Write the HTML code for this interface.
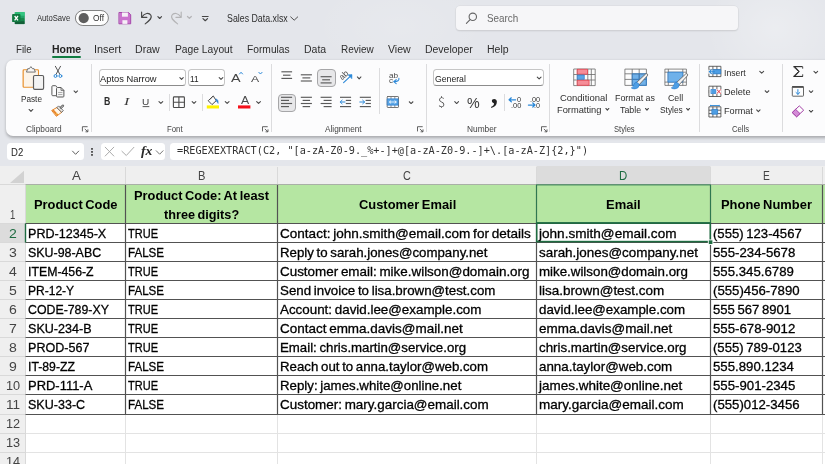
<!DOCTYPE html>
<html lang="en">
<head>
<meta charset="utf-8">
<title>Sales Data.xlsx - Excel</title>
<style>
html,body{margin:0;padding:0;}
body{width:825px;height:464px;overflow:hidden;background:#e4e6eb;font-family:"Liberation Sans",sans-serif;}
#app{position:relative;width:825px;height:464px;overflow:hidden;background:radial-gradient(ellipse 70px 60px at 775px 28px,rgba(255,255,255,.28),rgba(255,255,255,0) 100%),radial-gradient(ellipse 90px 50px at 400px 26px,rgba(255,255,255,.12),rgba(255,255,255,0) 100%),#e4e6eb;}
.t{position:absolute;white-space:nowrap;line-height:1;transform-origin:0 50%;display:block;}
.abs{position:absolute;}
#tx{position:absolute;left:0;top:0;width:825px;height:464px;will-change:transform;}
#ribbon{position:absolute;left:6px;top:60.3px;width:840px;height:75.7px;background:#fcfcfd;border-radius:7px 0 0 7px;box-shadow:0 1.2px 3px rgba(0,0,0,.26);}
#search{position:absolute;left:455.5px;top:6px;width:282.5px;height:24px;background:#f6f6f8;border-radius:4px;box-shadow:0 0 0 .6px #d9dade,0 1px 1.5px rgba(0,0,0,.16);}
.fbox{position:absolute;top:142.8px;height:17.4px;background:#fff;border-radius:3.5px;}
.combo{position:absolute;top:69px;height:17px;background:#fff;border:1px solid #c6c6c6;border-bottom-color:#8c8c8c;border-radius:3.5px;box-sizing:border-box;}
.sel{position:absolute;background:#e7e7e9;border:1px solid #a6a6a8;border-radius:4px;box-sizing:border-box;}
.vsep{position:absolute;width:1px;background:#dcdcde;}
svg{position:absolute;left:0;top:0;overflow:visible;}
</style>
</head>
<body>
<div id="app">
<div id="search"></div>
<div class="abs" style="left:51.9px;top:56.1px;width:29.2px;height:2px;border-radius:1px;background:#107c41;"></div>
<div id="ribbon"></div>
<!-- ribbon boxes -->
<div class="combo" style="left:98.5px;width:87px;"></div>
<div class="combo" style="left:188px;width:37.3px;"></div>
<div class="combo" style="left:433px;width:110.5px;"></div>
<div class="sel" style="left:317px;top:68.5px;width:18.5px;height:18.5px;"></div>
<div class="sel" style="left:277.5px;top:93.5px;width:18px;height:18px;"></div>
<div class="vsep" style="left:91.2px;top:64px;height:68px;"></div>
<div class="vsep" style="left:270.8px;top:64px;height:68px;"></div>
<div class="vsep" style="left:379px;top:68px;height:46px;"></div>
<div class="vsep" style="left:426.3px;top:64px;height:68px;"></div>
<div class="vsep" style="left:549.3px;top:64px;height:68px;"></div>
<div class="vsep" style="left:698.8px;top:64px;height:68px;"></div>
<div class="vsep" style="left:782.3px;top:64px;height:68px;"></div>
<div class="vsep" style="left:169px;top:94px;height:17px;"></div>
<div class="vsep" style="left:202.3px;top:94px;height:17px;"></div>
<div class="vsep" style="left:504px;top:94px;height:17px;"></div>
<!-- formula bar -->
<div class="fbox" style="left:7px;width:76.5px;"></div>
<div class="fbox" style="left:100.5px;width:64px;"></div>
<div class="fbox" style="left:169.5px;width:700px;"></div>
<svg width="825" height="464" viewBox="0 0 825 464">
<rect x="0" y="166.0" width="825" height="298.0" fill="#fff"/>
<rect x="0" y="166.0" width="825" height="18.5" fill="#efefef"/>
<rect x="0" y="184.5" width="25.5" height="279.5" fill="#efefef"/>
<rect x="536.5" y="166.0" width="174.0" height="18.5" fill="#dcdcdc"/>
<rect x="0" y="223.5" width="25.5" height="19.07" fill="#dcdcdc"/>
<path d="M24 170.8 L24 183 L10 183 Z" fill="#d2d2d2"/>
<rect x="25.5" y="185.0" width="799.5" height="38.30000000000001" fill="#b5e6a2"/>
<line x1="25.5" x2="825" y1="414.50" y2="414.50" stroke="#e3e3e3" stroke-width="1"/>
<line x1="25.5" x2="825" y1="433.50" y2="433.50" stroke="#e3e3e3" stroke-width="1"/>
<line x1="25.5" x2="825" y1="452.50" y2="452.50" stroke="#e3e3e3" stroke-width="1"/>
<line x1="25.5" x2="825" y1="471.50" y2="471.50" stroke="#e3e3e3" stroke-width="1"/>
<line x1="125.5" x2="125.5" y1="414.50" y2="464" stroke="#e3e3e3" stroke-width="1"/>
<line x1="277.5" x2="277.5" y1="414.50" y2="464" stroke="#e3e3e3" stroke-width="1"/>
<line x1="536.5" x2="536.5" y1="414.50" y2="464" stroke="#e3e3e3" stroke-width="1"/>
<line x1="710.5" x2="710.5" y1="414.50" y2="464" stroke="#e3e3e3" stroke-width="1"/>
<line x1="822.5" x2="822.5" y1="414.50" y2="464" stroke="#e3e3e3" stroke-width="1"/>
<line x1="125.5" x2="125.5" y1="167.0" y2="184.5" stroke="#d9d9d9" stroke-width="1"/>
<line x1="277.5" x2="277.5" y1="167.0" y2="184.5" stroke="#d9d9d9" stroke-width="1"/>
<line x1="536.5" x2="536.5" y1="167.0" y2="184.5" stroke="#d9d9d9" stroke-width="1"/>
<line x1="710.5" x2="710.5" y1="167.0" y2="184.5" stroke="#d9d9d9" stroke-width="1"/>
<line x1="822.5" x2="822.5" y1="167.0" y2="184.5" stroke="#d9d9d9" stroke-width="1"/>
<line x1="0" x2="25.5" y1="223.50" y2="223.50" stroke="#d9d9d9" stroke-width="1"/>
<line x1="0" x2="25.5" y1="242.50" y2="242.50" stroke="#d9d9d9" stroke-width="1"/>
<line x1="0" x2="25.5" y1="261.50" y2="261.50" stroke="#d9d9d9" stroke-width="1"/>
<line x1="0" x2="25.5" y1="280.50" y2="280.50" stroke="#d9d9d9" stroke-width="1"/>
<line x1="0" x2="25.5" y1="299.50" y2="299.50" stroke="#d9d9d9" stroke-width="1"/>
<line x1="0" x2="25.5" y1="318.50" y2="318.50" stroke="#d9d9d9" stroke-width="1"/>
<line x1="0" x2="25.5" y1="337.50" y2="337.50" stroke="#d9d9d9" stroke-width="1"/>
<line x1="0" x2="25.5" y1="356.50" y2="356.50" stroke="#d9d9d9" stroke-width="1"/>
<line x1="0" x2="25.5" y1="375.50" y2="375.50" stroke="#d9d9d9" stroke-width="1"/>
<line x1="0" x2="25.5" y1="394.50" y2="394.50" stroke="#d9d9d9" stroke-width="1"/>
<line x1="0" x2="25.5" y1="414.50" y2="414.50" stroke="#d9d9d9" stroke-width="1"/>
<line x1="0" x2="25.5" y1="433.50" y2="433.50" stroke="#d9d9d9" stroke-width="1"/>
<line x1="0" x2="25.5" y1="452.50" y2="452.50" stroke="#d9d9d9" stroke-width="1"/>
<line x1="0" x2="25.5" y1="471.50" y2="471.50" stroke="#d9d9d9" stroke-width="1"/>
<line x1="25.5" x2="25.5" y1="184.5" y2="464" stroke="#d9d9d9" stroke-width="1"/>
<line x1="0" x2="825" y1="184.5" y2="184.5" stroke="#d9d9d9" stroke-width="1"/>
<line x1="25.5" x2="825" y1="184.5" y2="184.5" stroke="#a9b0a6" stroke-width="1"/>
<line x1="25.5" x2="825" y1="223.50" y2="223.50" stroke="#525252" stroke-width="1.2"/>
<line x1="25.5" x2="825" y1="242.50" y2="242.50" stroke="#525252" stroke-width="1.2"/>
<line x1="25.5" x2="825" y1="261.50" y2="261.50" stroke="#525252" stroke-width="1.2"/>
<line x1="25.5" x2="825" y1="280.50" y2="280.50" stroke="#525252" stroke-width="1.2"/>
<line x1="25.5" x2="825" y1="299.50" y2="299.50" stroke="#525252" stroke-width="1.2"/>
<line x1="25.5" x2="825" y1="318.50" y2="318.50" stroke="#525252" stroke-width="1.2"/>
<line x1="25.5" x2="825" y1="337.50" y2="337.50" stroke="#525252" stroke-width="1.2"/>
<line x1="25.5" x2="825" y1="356.50" y2="356.50" stroke="#525252" stroke-width="1.2"/>
<line x1="25.5" x2="825" y1="375.50" y2="375.50" stroke="#525252" stroke-width="1.2"/>
<line x1="25.5" x2="825" y1="394.50" y2="394.50" stroke="#525252" stroke-width="1.2"/>
<line x1="25.5" x2="825" y1="414.50" y2="414.50" stroke="#525252" stroke-width="1.2"/>
<line x1="125.5" x2="125.5" y1="185.0" y2="414.50" stroke="#525252" stroke-width="1.2"/>
<line x1="277.5" x2="277.5" y1="185.0" y2="414.50" stroke="#525252" stroke-width="1.2"/>
<line x1="536.5" x2="536.5" y1="185.0" y2="414.50" stroke="#525252" stroke-width="1.2"/>
<line x1="710.5" x2="710.5" y1="185.0" y2="414.50" stroke="#525252" stroke-width="1.2"/>
<line x1="822.5" x2="822.5" y1="185.0" y2="414.50" stroke="#525252" stroke-width="1.2"/>
<rect x="536.5" y="184.9" width="174.0" height="37.70000000000001" fill="none" stroke="#2d7a50" stroke-width="0.95"/>
<rect x="536.7" y="223.10000000000002" width="173.6" height="18.47" fill="none" stroke="#1e6c41" stroke-width="1.55"/>
<rect x="708.3" y="239.9" width="4.6" height="4.6" fill="#1e6c41" stroke="#fff" stroke-width="0.9"/>
<line x1="25.5" x2="25.5" y1="223.50" y2="242.50" stroke="#1e6c41" stroke-width="1.4"/>
</svg>
<svg width="825" height="464" viewBox="0 0 825 464" fill="none" stroke-linecap="round" stroke-linejoin="round">
<!-- ===== title bar ===== -->
<g id="ic-excel">
<rect x="14.6" y="11.9" width="10.2" height="12.3" rx="1" fill="#1a9457" stroke="#f3eef3" stroke-width=".5"/><rect x="14.8" y="12.1" width="9.800" height="3.100" fill="#2cb874"/><rect x="14.8" y="15.200" width="9.800" height="3" fill="#21a366"/><rect x="14.8" y="18.200" width="9.800" height="3" fill="#17864b"/><rect x="14.8" y="21.200" width="9.800" height="2.800" fill="#125f37"/>
<rect x="19.6" y="11.9" width="5.2" height="4.2" fill="#3ccf8a" opacity=".55"/>
<rect x="12.1" y="14.1" width="8.4" height="8" rx=".9" fill="#117a41"/>
<path d="M14.6 16 L18 20.4 M18 16 L14.6 20.4" stroke="#fff" stroke-width="1.25" stroke-linecap="butt"/>
</g>
<g id="ic-toggle">
<rect x="75.4" y="10.5" width="33" height="15" rx="7.5" fill="#fdfdfd" stroke="#666" stroke-width=".8"/>
<circle cx="83.7" cy="18.1" r="5.1" fill="#5e5e5e"/>
</g>
<g id="ic-save">
<path d="M119.3 12.5 h9.2 l2.2 2.2 v9.1 h-11.4 z" fill="#cb74ce" stroke="#a23fa6" stroke-width=".9"/>
<rect x="122" y="12.5" width="5.9" height="4.200" fill="#f6f0f7"/>
<rect x="122.4" y="20.200" width="5" height="3.700" fill="#f6f0f7"/>
</g>
<g id="ic-undo" stroke="#484848" stroke-width="1.15">
<path d="M141.6 12 v5.3 h5.3"/>
<path d="M142 16.9 C144.5 13 149 12.2 150.9 15.3 C152.4 17.8 150.2 20 145.2 23.9"/>
<path d="M157.9 16.700 l1.800 1.800 l1.800 -1.800" stroke-width="1.150"/>
</g>
<g id="ic-redo" stroke="#b4b4b6" stroke-width="1.15">
<path d="M181.2 12 v5.3 h-5.3"/>
<path d="M180.8 16.9 C178.3 13 173.800 12.2 171.9 15.3 C170.4 17.8 172.600 20 177.600 23.9"/>
<path d="M187.500 16.5 l1.900 1.900 l1.900 -1.900" stroke-width="1.300"/>
</g>
<g id="ic-qat" stroke="#444" stroke-width="1.2">
<path d="M202.400 16.500 h5.700"/>
<path d="M203 18.600 l2.250 2.100 l2.250 -2.100"/>
</g>
<path d="M290.700 16.900 l3.500 3.300 l3.500 -3.300" stroke="#505050" stroke-width="1"/>
<g id="ic-search" stroke="#666" stroke-width="1.100">
<circle cx="472.800" cy="16.800" r="3.700"/>
<path d="M470.100 19.600 l-3.700 3.800"/>
</g>
<g id="ic-paste">
<path d="M27 69.9 H24 Q23.200 69.9 23.200 70.700 V86.400 Q23.200 87.200 24 87.200 H33 M34.800 69.9 H37.600 Q38.400 69.9 38.400 70.700 V75" fill="none" stroke="#e8912d" stroke-width="1.300"/>
<path d="M23.900 70.600 H37.700 V75.400 H33.400 V86.500 H23.900 Z" fill="#fcf4e9" stroke="none"/>
<path d="M26.600 71.700 L27.700 68.700 H29.300 L30.900 66.600 L32.500 68.700 H34.100 L35.200 71.700 Z" fill="#f6f6f6" stroke="#666" stroke-width=".9"/>
<rect x="33.500" y="75.500" width="10.100" height="13.800" rx="1.300" fill="#f3f3f3" stroke="#5c5c5c" stroke-width="1.150"/>
</g>
<path d="M29.07 109.46 L30.95 111.32 L32.83 109.46" stroke="#484848" stroke-width="1.08"/>
<g id="ic-cut"><path d="M55.400 66.300 L60 74.600 M60.500 66.300 L55.900 74.600" stroke="#555" stroke-width="1"/><circle cx="55.500" cy="76" r="1.450" stroke="#2b88d8" stroke-width="1" fill="#fcfcfd"/><circle cx="60.400" cy="76" r="1.450" stroke="#2b88d8" stroke-width="1" fill="#fcfcfd"/></g>
<g id="ic-copy" stroke="#5a5a5a" stroke-width="1"><path d="M56 95.700 H52.800 Q51.900 95.700 51.900 94.800 V86.600 Q51.900 85.700 52.800 85.700 H55.600 Q56.500 85.700 56.500 86.600"/><path d="M56.500 88.300 Q56.500 87.500 57.300 87.500 H61 L63.900 90.400 V96.200 Q63.900 97 63.100 97 H57.300 Q56.500 97 56.500 96.200 Z" fill="#f4f4f4"/><path d="M61 87.700 V90.400 H63.700" stroke-width=".8"/><path d="M58.500 92.500 H62 M58.500 94.500 H62" stroke="#999" stroke-width=".8"/></g>
<path d="M74.07 90.96 L75.80 92.72 L77.53 90.96" stroke="#484848" stroke-width="1.08"/>
<g id="ic-fp"><path d="M52 110.300 L57.100 107.400 L61.900 112.100 L56.700 116.100 Z" fill="#fff6ea" stroke="#e8862a" stroke-width="1"/><path d="M52 110.300 L56.700 116.100 L58.400 114.800 L53.600 109.400 Z" fill="#e8862a" stroke="none"/><circle cx="56.700" cy="113.700" r=".7" fill="#f7c948" stroke="none"/><path d="M57.100 107.400 L58.600 105.900 L63.300 110.600 L61.900 112.100 Z" fill="#e9e9e9" stroke="#5a5a5a" stroke-width=".85"/><path d="M60.900 107.700 L63 105.700" stroke="#5a5a5a" stroke-width="2.300"/><path d="M60.900 107.700 L63 105.700" stroke="#eee" stroke-width=".8"/></g>
<g stroke="#484848" stroke-width=".85" stroke-linecap="butt"><path d="M82.40 131.40 V126.70 H87.60"/><path d="M84.80 129.00 L87.80 131.70 M87.90 129.40 V131.80 H85.50"/></g>
<path d="M179.87 77.56 L181.55 79.32 L183.23 77.56" stroke="#484848" stroke-width="1.08"/>
<path d="M219.17 77.56 L221.00 79.32 L222.83 77.56" stroke="#484848" stroke-width="1.08"/>
<path d="M239.55 73.95 L241.05 72.28 L242.55 73.95" stroke="#2b88d8" stroke-width="1"/>
<path d="M258.85 72.35 L260.45 74.02 L262.05 72.35" stroke="#2b88d8" stroke-width="1"/>
<path d="M142.60 106.60 H149.30" stroke="#444" stroke-width="0.9" stroke-linecap="butt"/>
<path d="M158.97 101.56 L160.85 103.42 L162.73 101.56" stroke="#484848" stroke-width="1.08"/>
<g stroke="#4a4a4a" stroke-width="1.100" stroke-linecap="butt"><rect x="173.400" y="96.900" width="11" height="10.600" rx=".8"/><path d="M178.900 96.900 V107.500 M173.400 102.200 H184.400"/></g>
<path d="M192.17 101.56 L194.00 103.42 L195.83 101.56" stroke="#484848" stroke-width="1.08"/>
<g id="ic-fill"><path d="M213.500 96.300 L216.200 100.700 L212 104.600 L208.500 101 Z" fill="#fdfdfd" stroke="#444" stroke-width=".95"/><path d="M212.600 96.400 L210.200 99.200" stroke="#444" stroke-width=".8"/><path d="M216 98.900 C217.900 99.200 218.400 101 218.100 103.500 C217.500 102.200 217 101.600 216.300 101.300 Z" fill="#2b7fd0" stroke="#2b7fd0" stroke-width=".5"/><rect x="206.800" y="105.400" width="12.200" height="3.100" fill="#fff200"/></g>
<path d="M225.27 101.56 L227.15 103.42 L229.03 101.56" stroke="#484848" stroke-width="1.08"/>
<rect x="238" y="105.400" width="12.400" height="3.100" fill="#f5101a"/>
<path d="M256.67 101.56 L258.55 103.42 L260.43 101.56" stroke="#484848" stroke-width="1.08"/>
<g stroke="#484848" stroke-width=".85" stroke-linecap="butt"><path d="M262.50 131.40 V126.70 H267.70"/><path d="M264.90 129.00 L267.90 131.70 M268.00 129.40 V131.80 H265.60"/></g>
<path d="M281.40 71.80 H292.10" stroke="#5a5a5a" stroke-width="1.15" stroke-linecap="butt"/>
<path d="M283.00 75.20 H290.50" stroke="#5a5a5a" stroke-width="1.15" stroke-linecap="butt"/>
<path d="M281.40 78.40 H292.10" stroke="#5a5a5a" stroke-width="1.15" stroke-linecap="butt"/>
<path d="M300.80 74.80 H311.90" stroke="#5a5a5a" stroke-width="1.15" stroke-linecap="butt"/>
<path d="M302.40 77.90 H310.30" stroke="#5a5a5a" stroke-width="1.15" stroke-linecap="butt"/>
<path d="M300.80 81.00 H311.90" stroke="#5a5a5a" stroke-width="1.15" stroke-linecap="butt"/>
<path d="M320.60 76.70 H331.60" stroke="#5a5a5a" stroke-width="1.15" stroke-linecap="butt"/>
<path d="M322.20 79.80 H330.00" stroke="#5a5a5a" stroke-width="1.15" stroke-linecap="butt"/>
<path d="M320.60 82.90 H331.60" stroke="#5a5a5a" stroke-width="1.15" stroke-linecap="butt"/>
<g id="ic-orient"><path d="M343.600 82.600 L351.300 75.300" stroke="#2b88d8" stroke-width="1.100"/><path d="M348 74.700 L352 74.600 L351.900 78.600 Z" fill="#2b88d8" stroke="#2b88d8" stroke-width=".5"/></g>
<path d="M357.37 76.96 L359.15 78.82 L360.93 76.96" stroke="#484848" stroke-width="1.08"/>
<path d="M281.00 97.30 H292.10" stroke="#5a5a5a" stroke-width="1.15" stroke-linecap="butt"/>
<path d="M281.00 100.40 H289.00" stroke="#5a5a5a" stroke-width="1.15" stroke-linecap="butt"/>
<path d="M281.00 103.50 H292.10" stroke="#5a5a5a" stroke-width="1.15" stroke-linecap="butt"/>
<path d="M281.00 106.60 H289.00" stroke="#5a5a5a" stroke-width="1.15" stroke-linecap="butt"/>
<path d="M300.80 97.30 H311.90" stroke="#5a5a5a" stroke-width="1.15" stroke-linecap="butt"/>
<path d="M302.60 100.40 H310.10" stroke="#5a5a5a" stroke-width="1.15" stroke-linecap="butt"/>
<path d="M300.80 103.50 H311.90" stroke="#5a5a5a" stroke-width="1.15" stroke-linecap="butt"/>
<path d="M302.60 106.60 H310.10" stroke="#5a5a5a" stroke-width="1.15" stroke-linecap="butt"/>
<path d="M320.60 97.30 H331.60" stroke="#5a5a5a" stroke-width="1.15" stroke-linecap="butt"/>
<path d="M323.60 100.40 H331.60" stroke="#5a5a5a" stroke-width="1.15" stroke-linecap="butt"/>
<path d="M320.60 103.50 H331.60" stroke="#5a5a5a" stroke-width="1.15" stroke-linecap="butt"/>
<path d="M323.60 106.60 H331.60" stroke="#5a5a5a" stroke-width="1.15" stroke-linecap="butt"/>
<path d="M340.00 97.30 H351.10" stroke="#5a5a5a" stroke-width="1.15" stroke-linecap="butt"/>
<path d="M345.80 100.40 H351.10" stroke="#5a5a5a" stroke-width="1.15" stroke-linecap="butt"/>
<path d="M345.80 103.50 H351.10" stroke="#5a5a5a" stroke-width="1.15" stroke-linecap="butt"/>
<path d="M340.00 106.60 H351.10" stroke="#5a5a5a" stroke-width="1.15" stroke-linecap="butt"/>
<path d="M345 102 H340.300 M342.100 100.200 L340.200 102 L342.100 103.800" stroke="#2b88d8" stroke-width="1"/>
<path d="M359.80 97.30 H370.90" stroke="#5a5a5a" stroke-width="1.15" stroke-linecap="butt"/>
<path d="M365.60 100.40 H370.90" stroke="#5a5a5a" stroke-width="1.15" stroke-linecap="butt"/>
<path d="M365.60 103.50 H370.90" stroke="#5a5a5a" stroke-width="1.15" stroke-linecap="butt"/>
<path d="M359.80 106.60 H370.90" stroke="#5a5a5a" stroke-width="1.15" stroke-linecap="butt"/>
<path d="M359.800 102 H364.500 M362.700 100.200 L364.600 102 L362.700 103.800" stroke="#2b88d8" stroke-width="1"/>
<path d="M398.900 78.200 Q399.600 81.600 394 81.700 M396.200 79.600 L393.700 81.700 L396.200 83.700" stroke="#2b88d8" stroke-width="1.050"/>
<g id="ic-merge"><rect x="387.200" y="96.500" width="11.300" height="11" rx=".6" stroke="#666" stroke-width=".9"/><path d="M391 96.500 V98.900 M394.800 96.500 V98.900 M391 105.100 V107.500 M394.800 105.100 V107.500" stroke="#777" stroke-width=".8"/><rect x="387.600" y="98.900" width="10.500" height="6.200" fill="#5aa5e6" stroke="#2b7fd0" stroke-width=".8"/><path d="M389.500 102 H396.200 M390.800 100.800 L389.500 102 L390.800 103.200 M394.900 100.800 L396.200 102 L394.900 103.200" stroke="#fff" stroke-width=".8"/></g>
<path d="M409.27 101.76 L411.10 103.52 L412.93 101.76" stroke="#484848" stroke-width="1.08"/>
<g stroke="#484848" stroke-width=".85" stroke-linecap="butt"><path d="M417.50 131.40 V126.70 H422.70"/><path d="M419.90 129.00 L422.90 131.70 M423.00 129.40 V131.80 H420.60"/></g>
<path d="M537.27 77.06 L539.15 78.92 L541.03 77.06" stroke="#484848" stroke-width="1.08"/>
<path d="M454.77 101.66 L456.65 103.52 L458.53 101.66" stroke="#484848" stroke-width="1.08"/>
<path d="M515.600 99.800 H509.300 M511.300 97.800 L509.100 99.800 L511.300 101.800" stroke="#2b88d8" stroke-width="1.250"/>
<path d="M528.400 105 H534.800 M532.800 103 L535 105 L532.800 107" stroke="#2b88d8" stroke-width="1.250"/>
<g stroke="#484848" stroke-width=".85" stroke-linecap="butt"><path d="M541.50 131.40 V126.70 H546.70"/><path d="M543.90 129.00 L546.90 131.70 M547.00 129.40 V131.80 H544.60"/></g>
<g id="ic-cf"><rect x="573.700" y="69" width="21.500" height="16.600" rx=".8" fill="#fdfdfd"/><path d="M573.700 69 H595.200 V85.600 H573.700 Z M573.700 74.500 H595.200 M573.700 80 H595.200 M577.500 69 V85.600 M587.800 69 V85.600 M591.300 69 V85.600" stroke="#6a6a6a" stroke-width=".8" stroke-linecap="butt"/><rect x="577.500" y="69.300" width="10" height="4.900" fill="#f58d98" stroke="#e8404c" stroke-width=".8"/><rect x="577.500" y="75" width="6.800" height="4.400" fill="#5aa5e6" stroke="#2b7fd0" stroke-width=".7"/><rect x="577.500" y="80.300" width="11.600" height="5" fill="#f58d98" stroke="#e8404c" stroke-width=".8"/></g>
<path d="M605.87 108.46 L607.35 110.22 L608.83 108.46" stroke="#484848" stroke-width="1.08"/>
<g id="ic-fat"><rect x="624.900" y="69.100" width="21.500" height="16.300" fill="#fdfdfd"/><rect x="632.200" y="73.800" width="14.200" height="11.600" fill="#6fb1ea"/><path d="M624.900 69.100 H646.400 V85.400 H624.900 Z M624.900 73.800 H646.400 M624.900 79.400 H646.400 M632.200 69.100 V85.400 M639.200 69.100 V85.400" stroke="#6a6a6a" stroke-width=".8" stroke-linecap="butt"/><path d="M632.200 73.800 H646.400 V85.400 H632.200 Z M632.200 79.400 H646.400 M639.200 73.800 V85.400" stroke="#2b7fd0" stroke-width=".8" stroke-linecap="butt"/></g>
<g><path d="M636.50 82.60 L645.60 74.00 Q646.90 73.10 647.50 74.10 Q648.10 75.00 647.10 76.10 L638.90 85.00 Z" fill="#f2f2f2" stroke="#666" stroke-width=".9"/><path d="M636.30 82.20 Q638.80 82.50 639.20 85.20 Q638.80 88.60 634.90 88.90 Q632.50 89.00 631.30 87.90 Q633.60 86.90 633.90 84.70 Q634.30 82.50 636.30 82.20 Z" fill="#4e9ee4" stroke="#2b7fd0" stroke-width=".6"/></g>
<path d="M645.47 108.46 L646.95 110.22 L648.43 108.46" stroke="#484848" stroke-width="1.08"/>
<g id="ic-cs"><rect x="664.900" y="69.100" width="21.500" height="16.300" fill="#fdfdfd"/><path d="M664.900 69.100 H686.400 V85.400 H664.900 Z M664.900 72.200 H686.400 M664.900 82.100 H686.400 M668.300 69.100 V85.400 M682.800 69.100 V85.400" stroke="#6a6a6a" stroke-width=".8" stroke-linecap="butt"/><rect x="668.300" y="72.200" width="14.500" height="9.900" fill="#6fb1ea" stroke="#2b7fd0" stroke-width=".8"/></g>
<g><path d="M676.50 82.60 L685.60 74.00 Q686.90 73.10 687.50 74.10 Q688.10 75.00 687.10 76.10 L678.90 85.00 Z" fill="#f2f2f2" stroke="#666" stroke-width=".9"/><path d="M676.30 82.20 Q678.80 82.50 679.20 85.20 Q678.80 88.60 674.90 88.90 Q672.50 89.00 671.30 87.90 Q673.60 86.90 673.90 84.70 Q674.30 82.50 676.30 82.20 Z" fill="#4e9ee4" stroke="#2b7fd0" stroke-width=".6"/></g>
<path d="M686.57 108.46 L688.05 110.22 L689.53 108.46" stroke="#484848" stroke-width="1.08"/>
<path d="M708.9 66.3 H720.9 V76.6 H708.9 Z M712.90 66.3 V76.6 M716.90 66.3 V76.6 M708.9 69.73 H720.9 M708.9 73.17 H720.9" stroke="#4a4a4a" stroke-width=".85" stroke-linecap="butt"/>
<rect x="708.300" y="69.600" width="5" height="4.200" fill="#fcfcfd" stroke="none"/><rect x="713.100" y="69.600" width="7.600" height="4.200" fill="#4e9ee4" stroke="#2b7fd0" stroke-width=".7"/><path d="M714.500 71.700 H709.500 M711.400 69.800 L709.300 71.700 L711.400 73.600" stroke="#2b88d8" stroke-width="1.100"/>
<path d="M759.77 71.36 L761.70 73.12 L763.63 71.36" stroke="#484848" stroke-width="1.08"/>
<path d="M708.9 86.2 H720.9 V96.5 H708.9 Z M712.90 86.2 V96.5 M716.90 86.2 V96.5 M708.9 89.63 H720.9 M708.9 93.07 H720.9" stroke="#4a4a4a" stroke-width=".85" stroke-linecap="butt"/>
<rect x="708.300" y="89" width="13.200" height="4.900" fill="#fcfcfd" stroke="none"/><rect x="711.300" y="89.500" width="4.500" height="4" fill="#4e9ee4" stroke="#2b7fd0" stroke-width=".7"/><path d="M717.100 89.800 L720.600 93.300 M720.600 89.800 L717.100 93.300" stroke="#e5303e" stroke-width="1"/><path d="M708.900 89.600 V93.400" stroke="#4a4a4a" stroke-width=".85"/>
<path d="M765.17 90.76 L767.00 92.52 L768.83 90.76" stroke="#484848" stroke-width="1.08"/>
<path d="M708.9 106.8 H720.9 V117.0 H708.9 Z M712.90 106.8 V117.0 M716.90 106.8 V117.0 M708.9 110.20 H720.9 M708.9 113.60 H720.9" stroke="#4a4a4a" stroke-width=".85" stroke-linecap="butt"/>
<rect x="712.100" y="109.400" width="5.500" height="4.800" fill="#4e9ee4" stroke="#2b7fd0" stroke-width=".7"/><path d="M710.500 106.300 V104.900 M719.300 106.300 V104.900 M710.500 105.500 H719.300" stroke="#2b88d8" stroke-width=".9" stroke-linecap="butt"/>
<path d="M756.67 109.86 L758.35 111.62 L760.03 109.86" stroke="#484848" stroke-width="1.08"/>
<path d="M802.700 68.300 V66.700 H793.400 L798.600 71.500 L793.400 76.400 H802.700 V74.700" stroke="#4a4a4a" stroke-width="1"/>
<path d="M813.97 71.36 L815.80 73.12 L817.63 71.36" stroke="#484848" stroke-width="1.08"/>
<rect x="792.300" y="86.600" width="11.200" height="9.600" rx=".6" fill="#fdfdfd" stroke="#555" stroke-width=".9"/><path d="M792.300 87 H803.500" stroke="#444" stroke-width="1.600" stroke-linecap="butt"/><path d="M797.900 89.600 V94.200 M796 92.500 L797.900 94.300 L799.800 92.500" stroke="#2b88d8" stroke-width="1"/>
<path d="M809.37 90.76 L811.05 92.52 L812.73 90.76" stroke="#484848" stroke-width="1.08"/>
<g id="ic-erase"><path d="M792.500 112.300 L799.300 105.900 L803.700 110.200 L796.900 116.500 Z" fill="#fdfdfd" stroke="#a33fa6" stroke-width="1"/><path d="M792.500 112.300 L795.600 109.300 L800 113.600 L796.900 116.500 Z" fill="#d48bd7" stroke="#a33fa6" stroke-width=".9"/></g>
<path d="M809.37 110.46 L811.05 112.22 L812.73 110.46" stroke="#484848" stroke-width="1.08"/>
<path d="M72.54 151.14 L75.60 154.33 L78.66 151.14" stroke="#555" stroke-width="0.95"/>
<g fill="#4a4a4a" stroke="none"><rect x="91" y="147.900" width="2" height="1.800" rx=".5"/><rect x="91" y="150.900" width="2" height="1.800" rx=".5"/><rect x="91" y="153.900" width="2" height="1.800" rx=".5"/></g>
<path d="M105.200 147.200 L113.800 156 M113.800 147.200 L105.200 156" stroke="#a6a6a6" stroke-width=".95"/>
<path d="M121.900 151.300 L126.300 155.500 L133.900 147.300" stroke="#a6a6a6" stroke-width=".95"/>
<path d="M156.25 150.75 L159.65 154.23 L163.05 150.75" stroke="#777" stroke-width="1"/>
</svg>

<div id="tx">
<span class="t" id="t0" style='left:37.40px;top:14.01px;font-size:8.6px;color:#2e2e2e;font-family:"Liberation Sans", sans-serif;transform:scaleX(0.8906);'>AutoSave</span>
<span class="t" id="t1" style='left:93.00px;top:14.01px;font-size:8.6px;color:#2e2e2e;font-family:"Liberation Sans", sans-serif;transform:scaleX(0.9726);'>Off</span>
<span class="t" id="t2" style='left:226.65px;top:14.00px;font-size:10.1px;color:#2e2e2e;font-family:"Liberation Sans", sans-serif;transform:scaleX(0.8727);'>Sales Data.xlsx</span>
<span class="t" id="t3" style='left:487.10px;top:13.01px;font-size:11.4px;color:#686868;font-family:"Liberation Sans", sans-serif;transform:scaleX(0.8671);'>Search</span>
<span class="t" id="t4" style='left:16.45px;top:45.02px;font-size:10px;color:#2e2e2e;font-family:"Liberation Sans", sans-serif;transform:scaleX(0.9736);'>File</span>
<span class="t" id="t5" style='left:51.75px;top:45.02px;font-size:10px;color:#222;font-family:"Liberation Sans", sans-serif;font-weight:bold;transform:scaleX(1.0469);'>Home</span>
<span class="t" id="t6" style='left:94.15px;top:45.02px;font-size:10px;color:#2e2e2e;font-family:"Liberation Sans", sans-serif;transform:scaleX(1.0873);'>Insert</span>
<span class="t" id="t7" style='left:135.15px;top:45.02px;font-size:10px;color:#2e2e2e;font-family:"Liberation Sans", sans-serif;transform:scaleX(1.0581);'>Draw</span>
<span class="t" id="t8" style='left:174.65px;top:45.02px;font-size:10px;color:#2e2e2e;font-family:"Liberation Sans", sans-serif;transform:scaleX(1.0272);'>Page Layout</span>
<span class="t" id="t9" style='left:246.65px;top:45.02px;font-size:10px;color:#2e2e2e;font-family:"Liberation Sans", sans-serif;transform:scaleX(1.0243);'>Formulas</span>
<span class="t" id="t10" style='left:303.65px;top:45.02px;font-size:10px;color:#2e2e2e;font-family:"Liberation Sans", sans-serif;transform:scaleX(1.0509);'>Data</span>
<span class="t" id="t11" style='left:340.65px;top:45.02px;font-size:10px;color:#2e2e2e;font-family:"Liberation Sans", sans-serif;transform:scaleX(0.9970);'>Review</span>
<span class="t" id="t12" style='left:388.15px;top:45.02px;font-size:10px;color:#2e2e2e;font-family:"Liberation Sans", sans-serif;transform:scaleX(1.0558);'>View</span>
<span class="t" id="t13" style='left:425.15px;top:45.02px;font-size:10px;color:#2e2e2e;font-family:"Liberation Sans", sans-serif;transform:scaleX(1.0462);'>Developer</span>
<span class="t" id="t14" style='left:487.15px;top:45.02px;font-size:10px;color:#2e2e2e;font-family:"Liberation Sans", sans-serif;transform:scaleX(1.0545);'>Help</span>
<span class="t" id="t15" style='left:25.67px;top:125.00px;font-size:9.3px;color:#444;font-family:"Liberation Sans", sans-serif;transform:scaleX(0.8958);'>Clipboard</span>
<span class="t" id="t16" style='left:167.17px;top:125.00px;font-size:9.3px;color:#444;font-family:"Liberation Sans", sans-serif;transform:scaleX(0.8410);'>Font</span>
<span class="t" id="t17" style='left:324.67px;top:125.00px;font-size:9.3px;color:#444;font-family:"Liberation Sans", sans-serif;transform:scaleX(0.8865);'>Alignment</span>
<span class="t" id="t18" style='left:466.67px;top:125.00px;font-size:9.3px;color:#444;font-family:"Liberation Sans", sans-serif;transform:scaleX(0.8964);'>Number</span>
<span class="t" id="t19" style='left:613.67px;top:125.00px;font-size:9.3px;color:#444;font-family:"Liberation Sans", sans-serif;transform:scaleX(0.8153);'>Styles</span>
<span class="t" id="t20" style='left:731.67px;top:125.00px;font-size:9.3px;color:#444;font-family:"Liberation Sans", sans-serif;transform:scaleX(0.8297);'>Cells</span>
<span class="t" id="t21" style='left:20.97px;top:95.01px;font-size:9.3px;color:#2e2e2e;font-family:"Liberation Sans", sans-serif;transform:scaleX(0.8810);'>Paste</span>
<span class="t" id="t22" style='left:99.76px;top:74.01px;font-size:9.8px;color:#222;font-family:"Liberation Sans", sans-serif;transform:scaleX(0.9533);'>Aptos Narrow</span>
<span class="t" id="t23" style='left:190.06px;top:74.01px;font-size:9.8px;color:#222;font-family:"Liberation Sans", sans-serif;transform:scaleX(0.8441);'>11</span>
<span class="t" id="t24" style='left:435.16px;top:74.02px;font-size:9.8px;color:#222;font-family:"Liberation Sans", sans-serif;transform:scaleX(0.8860);'>General</span>
<span class="t" id="t25" style='left:560.36px;top:93.01px;font-size:9.8px;color:#2e2e2e;font-family:"Liberation Sans", sans-serif;transform:scaleX(0.9644);'>Conditional</span>
<span class="t" id="t26" style='left:557.46px;top:105.00px;font-size:9.8px;color:#2e2e2e;font-family:"Liberation Sans", sans-serif;transform:scaleX(0.9478);'>Formatting</span>
<span class="t" id="t27" style='left:615.26px;top:93.01px;font-size:9.8px;color:#2e2e2e;font-family:"Liberation Sans", sans-serif;transform:scaleX(0.9065);'>Format as</span>
<span class="t" id="t28" style='left:620.36px;top:105.00px;font-size:9.8px;color:#2e2e2e;font-family:"Liberation Sans", sans-serif;transform:scaleX(0.9003);'>Table</span>
<span class="t" id="t29" style='left:668.06px;top:93.01px;font-size:9.8px;color:#2e2e2e;font-family:"Liberation Sans", sans-serif;transform:scaleX(0.8991);'>Cell</span>
<span class="t" id="t30" style='left:660.06px;top:105.00px;font-size:9.8px;color:#2e2e2e;font-family:"Liberation Sans", sans-serif;transform:scaleX(0.8538);'>Styles</span>
<span class="t" id="t31" style='left:724.46px;top:68.01px;font-size:9.8px;color:#2e2e2e;font-family:"Liberation Sans", sans-serif;transform:scaleX(0.8846);'>Insert</span>
<span class="t" id="t32" style='left:724.46px;top:87.02px;font-size:9.8px;color:#2e2e2e;font-family:"Liberation Sans", sans-serif;transform:scaleX(0.9350);'>Delete</span>
<span class="t" id="t33" style='left:724.46px;top:106.01px;font-size:9.8px;color:#2e2e2e;font-family:"Liberation Sans", sans-serif;transform:scaleX(0.9309);'>Format</span>
<span class="t" id="t34" style='left:10.65px;top:148.01px;font-size:10px;color:#222;font-family:"Liberation Sans", sans-serif;transform:scaleX(0.9534);'>D2</span>
<span class="t" id="t35" style='left:177.14px;top:146.01px;font-size:10.2px;color:#333;font-family:"DejaVu Sans Mono", "Liberation Mono", monospace;transform:scaleX(1.0002);'>=REGEXEXTRACT(C2, "[a-zA-Z0-9._%+-]+@[a-zA-Z0-9.-]+\.[a-zA-Z]{2,}")</span>
<span class="t" id="t36" style='left:71.58px;top:170.02px;font-size:12px;color:#444;font-family:"Liberation Sans", sans-serif;transform:scaleX(1.1028);'>A</span>
<span class="t" id="t37" style='left:197.78px;top:170.02px;font-size:12px;color:#444;font-family:"Liberation Sans", sans-serif;transform:scaleX(0.9282);'>B</span>
<span class="t" id="t38" style='left:403.08px;top:170.02px;font-size:12px;color:#444;font-family:"Liberation Sans", sans-serif;transform:scaleX(0.9041);'>C</span>
<span class="t" id="t39" style='left:619.38px;top:170.02px;font-size:12px;color:#1e6c41;font-family:"Liberation Sans", sans-serif;transform:scaleX(0.9502);'>D</span>
<span class="t" id="t40" style='left:763.08px;top:170.02px;font-size:12px;color:#444;font-family:"Liberation Sans", sans-serif;transform:scaleX(0.8533);'>E</span>
<span class="t" id="t41" style='left:33.53px;top:198.01px;font-size:13.3px;color:#000;font-family:"Liberation Sans", sans-serif;font-weight:bold;word-spacing:-1px;transform:scaleX(0.9694);'>Product Code</span>
<span class="t" id="t42" style='left:133.93px;top:189.01px;font-size:13.3px;color:#000;font-family:"Liberation Sans", sans-serif;font-weight:bold;word-spacing:-1px;transform:scaleX(0.9649);'>Product Code: At least</span>
<span class="t" id="t43" style='left:164.03px;top:208.02px;font-size:13.3px;color:#000;font-family:"Liberation Sans", sans-serif;font-weight:bold;word-spacing:-1px;transform:scaleX(0.9535);'>three digits?</span>
<span class="t" id="t44" style='left:359.03px;top:198.01px;font-size:13.3px;color:#000;font-family:"Liberation Sans", sans-serif;font-weight:bold;word-spacing:-1px;transform:scaleX(0.9700);'>Customer Email</span>
<span class="t" id="t45" style='left:606.03px;top:198.01px;font-size:13.3px;color:#000;font-family:"Liberation Sans", sans-serif;font-weight:bold;transform:scaleX(0.9760);'>Email</span>
<span class="t" id="t46" style='left:720.53px;top:198.01px;font-size:13.3px;color:#000;font-family:"Liberation Sans", sans-serif;font-weight:bold;word-spacing:-1px;transform:scaleX(0.9717);'>Phone Number</span>
<span class="t" id="t47" style='left:28.34px;top:227.00px;font-size:13.2px;color:#000;font-family:"Liberation Sans", sans-serif;-webkit-text-stroke:.3px;transform:scaleX(0.9529);'>PRD-12345-X</span>
<span class="t" id="t48" style='left:127.74px;top:227.00px;font-size:13.2px;color:#000;font-family:"Liberation Sans", sans-serif;-webkit-text-stroke:.3px;transform:scaleX(0.8362);'>TRUE</span>
<span class="t" id="t49" style='left:280.24px;top:227.00px;font-size:13.2px;color:#000;font-family:"Liberation Sans", sans-serif;word-spacing:-1px;-webkit-text-stroke:.3px;transform:scaleX(1.0271);'>Contact: john.smith@email.com for details</span>
<span class="t" id="t50" style='left:538.84px;top:227.00px;font-size:13.2px;color:#000;font-family:"Liberation Sans", sans-serif;-webkit-text-stroke:.3px;transform:scaleX(1.0294);'>john.smith@email.com</span>
<span class="t" id="t51" style='left:712.74px;top:227.00px;font-size:13.2px;color:#000;font-family:"Liberation Sans", sans-serif;word-spacing:-1px;-webkit-text-stroke:.3px;transform:scaleX(0.9948);'>(555) 123-4567</span>
<span class="t" id="t52" style='left:28.34px;top:246.01px;font-size:13.2px;color:#000;font-family:"Liberation Sans", sans-serif;-webkit-text-stroke:.3px;transform:scaleX(0.9413);'>SKU-98-ABC</span>
<span class="t" id="t53" style='left:127.74px;top:246.01px;font-size:13.2px;color:#000;font-family:"Liberation Sans", sans-serif;-webkit-text-stroke:.3px;transform:scaleX(0.8773);'>FALSE</span>
<span class="t" id="t54" style='left:280.24px;top:246.01px;font-size:13.2px;color:#000;font-family:"Liberation Sans", sans-serif;word-spacing:-1px;-webkit-text-stroke:.3px;transform:scaleX(1.0062);'>Reply to sarah.jones@company.net</span>
<span class="t" id="t55" style='left:538.84px;top:246.01px;font-size:13.2px;color:#000;font-family:"Liberation Sans", sans-serif;-webkit-text-stroke:.3px;transform:scaleX(1.0181);'>sarah.jones@company.net</span>
<span class="t" id="t56" style='left:712.74px;top:246.01px;font-size:13.2px;color:#000;font-family:"Liberation Sans", sans-serif;-webkit-text-stroke:.3px;transform:scaleX(1.0022);'>555-234-5678</span>
<span class="t" id="t57" style='left:28.34px;top:265.00px;font-size:13.2px;color:#000;font-family:"Liberation Sans", sans-serif;-webkit-text-stroke:.3px;transform:scaleX(0.9329);'>ITEM-456-Z</span>
<span class="t" id="t58" style='left:127.74px;top:265.00px;font-size:13.2px;color:#000;font-family:"Liberation Sans", sans-serif;-webkit-text-stroke:.3px;transform:scaleX(0.8362);'>TRUE</span>
<span class="t" id="t59" style='left:280.24px;top:265.00px;font-size:13.2px;color:#000;font-family:"Liberation Sans", sans-serif;word-spacing:-1px;-webkit-text-stroke:.3px;transform:scaleX(1.0177);'>Customer email: mike.wilson@domain.org</span>
<span class="t" id="t60" style='left:538.84px;top:265.00px;font-size:13.2px;color:#000;font-family:"Liberation Sans", sans-serif;-webkit-text-stroke:.3px;transform:scaleX(1.0094);'>mike.wilson@domain.org</span>
<span class="t" id="t61" style='left:712.74px;top:265.00px;font-size:13.2px;color:#000;font-family:"Liberation Sans", sans-serif;-webkit-text-stroke:.3px;transform:scaleX(1.0019);'>555.345.6789</span>
<span class="t" id="t62" style='left:28.34px;top:284.00px;font-size:13.2px;color:#000;font-family:"Liberation Sans", sans-serif;-webkit-text-stroke:.3px;transform:scaleX(0.9119);'>PR-12-Y</span>
<span class="t" id="t63" style='left:127.74px;top:284.00px;font-size:13.2px;color:#000;font-family:"Liberation Sans", sans-serif;-webkit-text-stroke:.3px;transform:scaleX(0.8773);'>FALSE</span>
<span class="t" id="t64" style='left:280.24px;top:284.00px;font-size:13.2px;color:#000;font-family:"Liberation Sans", sans-serif;word-spacing:-1px;-webkit-text-stroke:.3px;transform:scaleX(1.0093);'>Send invoice to lisa.brown@test.com</span>
<span class="t" id="t65" style='left:538.84px;top:284.00px;font-size:13.2px;color:#000;font-family:"Liberation Sans", sans-serif;-webkit-text-stroke:.3px;transform:scaleX(1.0223);'>lisa.brown@test.com</span>
<span class="t" id="t66" style='left:712.74px;top:284.00px;font-size:13.2px;color:#000;font-family:"Liberation Sans", sans-serif;-webkit-text-stroke:.3px;transform:scaleX(1.0011);'>(555)456-7890</span>
<span class="t" id="t67" style='left:28.34px;top:303.00px;font-size:13.2px;color:#000;font-family:"Liberation Sans", sans-serif;-webkit-text-stroke:.3px;transform:scaleX(0.9357);'>CODE-789-XY</span>
<span class="t" id="t68" style='left:127.74px;top:303.00px;font-size:13.2px;color:#000;font-family:"Liberation Sans", sans-serif;-webkit-text-stroke:.3px;transform:scaleX(0.8362);'>TRUE</span>
<span class="t" id="t69" style='left:280.24px;top:303.00px;font-size:13.2px;color:#000;font-family:"Liberation Sans", sans-serif;word-spacing:-1px;-webkit-text-stroke:.3px;transform:scaleX(1.0143);'>Account: david.lee@example.com</span>
<span class="t" id="t70" style='left:538.84px;top:303.00px;font-size:13.2px;color:#000;font-family:"Liberation Sans", sans-serif;-webkit-text-stroke:.3px;transform:scaleX(1.0105);'>david.lee@example.com</span>
<span class="t" id="t71" style='left:712.74px;top:303.00px;font-size:13.2px;color:#000;font-family:"Liberation Sans", sans-serif;word-spacing:-1px;-webkit-text-stroke:.3px;transform:scaleX(0.9918);'>555 567 8901</span>
<span class="t" id="t72" style='left:28.34px;top:322.00px;font-size:13.2px;color:#000;font-family:"Liberation Sans", sans-serif;-webkit-text-stroke:.3px;transform:scaleX(0.9523);'>SKU-234-B</span>
<span class="t" id="t73" style='left:127.74px;top:322.00px;font-size:13.2px;color:#000;font-family:"Liberation Sans", sans-serif;-webkit-text-stroke:.3px;transform:scaleX(0.8362);'>TRUE</span>
<span class="t" id="t74" style='left:280.24px;top:322.00px;font-size:13.2px;color:#000;font-family:"Liberation Sans", sans-serif;word-spacing:-1px;-webkit-text-stroke:.3px;transform:scaleX(1.0216);'>Contact emma.davis@mail.net</span>
<span class="t" id="t75" style='left:538.84px;top:322.00px;font-size:13.2px;color:#000;font-family:"Liberation Sans", sans-serif;-webkit-text-stroke:.3px;transform:scaleX(1.0197);'>emma.davis@mail.net</span>
<span class="t" id="t76" style='left:712.74px;top:322.00px;font-size:13.2px;color:#000;font-family:"Liberation Sans", sans-serif;-webkit-text-stroke:.3px;transform:scaleX(1.0022);'>555-678-9012</span>
<span class="t" id="t77" style='left:28.34px;top:341.00px;font-size:13.2px;color:#000;font-family:"Liberation Sans", sans-serif;-webkit-text-stroke:.3px;transform:scaleX(0.9523);'>PROD-567</span>
<span class="t" id="t78" style='left:127.74px;top:341.00px;font-size:13.2px;color:#000;font-family:"Liberation Sans", sans-serif;-webkit-text-stroke:.3px;transform:scaleX(0.8362);'>TRUE</span>
<span class="t" id="t79" style='left:280.24px;top:341.00px;font-size:13.2px;color:#000;font-family:"Liberation Sans", sans-serif;word-spacing:-1px;-webkit-text-stroke:.3px;transform:scaleX(1.0037);'>Email: chris.martin@service.org</span>
<span class="t" id="t80" style='left:538.84px;top:341.00px;font-size:13.2px;color:#000;font-family:"Liberation Sans", sans-serif;-webkit-text-stroke:.3px;transform:scaleX(1.0102);'>chris.martin@service.org</span>
<span class="t" id="t81" style='left:712.74px;top:341.00px;font-size:13.2px;color:#000;font-family:"Liberation Sans", sans-serif;word-spacing:-1px;-webkit-text-stroke:.3px;transform:scaleX(0.9948);'>(555) 789-0123</span>
<span class="t" id="t82" style='left:28.34px;top:360.00px;font-size:13.2px;color:#000;font-family:"Liberation Sans", sans-serif;-webkit-text-stroke:.3px;transform:scaleX(0.9280);'>IT-89-ZZ</span>
<span class="t" id="t83" style='left:127.74px;top:360.00px;font-size:13.2px;color:#000;font-family:"Liberation Sans", sans-serif;-webkit-text-stroke:.3px;transform:scaleX(0.8773);'>FALSE</span>
<span class="t" id="t84" style='left:280.24px;top:360.00px;font-size:13.2px;color:#000;font-family:"Liberation Sans", sans-serif;word-spacing:-1px;-webkit-text-stroke:.3px;transform:scaleX(1.0056);'>Reach out to anna.taylor@web.com</span>
<span class="t" id="t85" style='left:538.84px;top:360.00px;font-size:13.2px;color:#000;font-family:"Liberation Sans", sans-serif;-webkit-text-stroke:.3px;transform:scaleX(1.0138);'>anna.taylor@web.com</span>
<span class="t" id="t86" style='left:712.74px;top:360.00px;font-size:13.2px;color:#000;font-family:"Liberation Sans", sans-serif;-webkit-text-stroke:.3px;transform:scaleX(1.0019);'>555.890.1234</span>
<span class="t" id="t87" style='left:28.34px;top:379.01px;font-size:13.2px;color:#000;font-family:"Liberation Sans", sans-serif;-webkit-text-stroke:.3px;transform:scaleX(0.9825);'>PRD-111-A</span>
<span class="t" id="t88" style='left:127.74px;top:379.01px;font-size:13.2px;color:#000;font-family:"Liberation Sans", sans-serif;-webkit-text-stroke:.3px;transform:scaleX(0.8362);'>TRUE</span>
<span class="t" id="t89" style='left:280.24px;top:379.01px;font-size:13.2px;color:#000;font-family:"Liberation Sans", sans-serif;word-spacing:-1px;-webkit-text-stroke:.3px;transform:scaleX(1.0059);'>Reply: james.white@online.net</span>
<span class="t" id="t90" style='left:538.84px;top:379.01px;font-size:13.2px;color:#000;font-family:"Liberation Sans", sans-serif;-webkit-text-stroke:.3px;transform:scaleX(1.0214);'>james.white@online.net</span>
<span class="t" id="t91" style='left:712.74px;top:379.01px;font-size:13.2px;color:#000;font-family:"Liberation Sans", sans-serif;-webkit-text-stroke:.3px;transform:scaleX(1.0022);'>555-901-2345</span>
<span class="t" id="t92" style='left:28.34px;top:398.00px;font-size:13.2px;color:#000;font-family:"Liberation Sans", sans-serif;-webkit-text-stroke:.3px;transform:scaleX(0.9506);'>SKU-33-C</span>
<span class="t" id="t93" style='left:127.74px;top:398.00px;font-size:13.2px;color:#000;font-family:"Liberation Sans", sans-serif;-webkit-text-stroke:.3px;transform:scaleX(0.8773);'>FALSE</span>
<span class="t" id="t94" style='left:280.24px;top:398.00px;font-size:13.2px;color:#000;font-family:"Liberation Sans", sans-serif;word-spacing:-1px;-webkit-text-stroke:.3px;transform:scaleX(1.0188);'>Customer: mary.garcia@email.com</span>
<span class="t" id="t95" style='left:538.84px;top:398.00px;font-size:13.2px;color:#000;font-family:"Liberation Sans", sans-serif;-webkit-text-stroke:.3px;transform:scaleX(1.0229);'>mary.garcia@email.com</span>
<span class="t" id="t96" style='left:712.74px;top:398.00px;font-size:13.2px;color:#000;font-family:"Liberation Sans", sans-serif;-webkit-text-stroke:.3px;transform:scaleX(1.0011);'>(555)012-3456</span>
<span class="t" id="t97" style='left:10.14px;top:208.00px;font-size:13.2px;color:#444;font-family:"Liberation Sans", sans-serif;transform:scaleX(0.7250);'>1</span>
<span class="t" id="t98" style='left:8.84px;top:227.00px;font-size:13.2px;color:#1e6c41;font-family:"Liberation Sans", sans-serif;transform:scaleX(1.0654);'>2</span>
<span class="t" id="t99" style='left:8.84px;top:246.01px;font-size:13.2px;color:#444;font-family:"Liberation Sans", sans-serif;transform:scaleX(1.0654);'>3</span>
<span class="t" id="t100" style='left:8.84px;top:265.00px;font-size:13.2px;color:#444;font-family:"Liberation Sans", sans-serif;transform:scaleX(1.0654);'>4</span>
<span class="t" id="t101" style='left:8.84px;top:284.00px;font-size:13.2px;color:#444;font-family:"Liberation Sans", sans-serif;transform:scaleX(1.0654);'>5</span>
<span class="t" id="t102" style='left:8.84px;top:303.00px;font-size:13.2px;color:#444;font-family:"Liberation Sans", sans-serif;transform:scaleX(1.0654);'>6</span>
<span class="t" id="t103" style='left:8.84px;top:322.00px;font-size:13.2px;color:#444;font-family:"Liberation Sans", sans-serif;transform:scaleX(1.0654);'>7</span>
<span class="t" id="t104" style='left:8.84px;top:341.00px;font-size:13.2px;color:#444;font-family:"Liberation Sans", sans-serif;transform:scaleX(1.0654);'>8</span>
<span class="t" id="t105" style='left:8.84px;top:360.00px;font-size:13.2px;color:#444;font-family:"Liberation Sans", sans-serif;transform:scaleX(1.0654);'>9</span>
<span class="t" id="t106" style='left:5.94px;top:379.01px;font-size:13.2px;color:#444;font-family:"Liberation Sans", sans-serif;transform:scaleX(0.9627);'>10</span>
<span class="t" id="t107" style='left:5.94px;top:398.00px;font-size:13.2px;color:#444;font-family:"Liberation Sans", sans-serif;transform:scaleX(1.0307);'>11</span>
<span class="t" id="t108" style='left:5.94px;top:417.01px;font-size:13.2px;color:#444;font-family:"Liberation Sans", sans-serif;transform:scaleX(0.9627);'>12</span>
<span class="t" id="t109" style='left:5.94px;top:436.00px;font-size:13.2px;color:#444;font-family:"Liberation Sans", sans-serif;transform:scaleX(0.9627);'>13</span>
<span class="t" id="t110" style='left:5.94px;top:455.01px;font-size:13.2px;color:#444;font-family:"Liberation Sans", sans-serif;transform:scaleX(0.9627);'>14</span>
<span class="t" id="t111" style='left:104.14px;top:97.00px;font-size:10.2px;color:#2a2a2a;font-family:"Liberation Sans", sans-serif;font-weight:bold;transform:scaleX(0.8580);'>B</span>
<span class="t" id="t112" style='left:124.23px;top:97.01px;font-size:10.6px;color:#3c3c3c;font-family:"Liberation Serif", serif;font-style:italic;transform:scaleX(1.5128);'>I</span>
<span class="t" id="t113" style='left:142.26px;top:97.01px;font-size:9.6px;color:#3c3c3c;font-family:"Liberation Sans", sans-serif;transform:scaleX(1.0482);'>U</span>
<span class="t" id="t114" style='left:230.60px;top:73.01px;font-size:11.5px;color:#444;font-family:"Liberation Sans", sans-serif;transform:scaleX(1.2520);'>A</span>
<span class="t" id="t115" style='left:251.16px;top:74.00px;font-size:9.6px;color:#444;font-family:"Liberation Sans", sans-serif;transform:scaleX(1.2756);'>A</span>
<span class="t" id="t116" style='left:240.61px;top:95.01px;font-size:11.2px;color:#4a4a4a;font-family:"Liberation Sans", sans-serif;transform:scaleX(1.0958);'>A</span>
<span class="t" id="t117" style='left:438.45px;top:96.01px;font-size:12.8px;color:#3a3a3a;font-family:"Noto Sans CJK SC", "DejaVu Sans Light", sans-serif;font-weight:300;transform:scaleX(1.0491);'>$</span>
<span class="t" id="t118" style='left:467.40px;top:96.01px;font-size:14.2px;color:#3c3c3c;font-family:"Liberation Sans", sans-serif;transform:scaleX(1.0055);'>%</span>
<span class="t" id="t119" style='left:792.70px;top:64.00px;font-size:14.4px;color:#222;font-family:"Noto Sans CJK SC", "DejaVu Sans Light", sans-serif;font-weight:300;transform:scaleX(1.2480);'>Σ</span>
<span class="t" id="t120" style='left:140.86px;top:145.02px;font-size:12.6px;color:#2a2a2a;font-family:"Liberation Serif", serif;font-weight:bold;font-style:italic;transform:scaleX(1.0935);'>fx</span>
<span class="t" id="t121" style='left:510.52px;top:102.00px;font-size:7.9px;color:#333;font-family:"Liberation Sans", sans-serif;transform:scaleX(0.9425);'>.00</span>
<span class="t" id="t122" style='left:516.72px;top:96.01px;font-size:7.9px;color:#333;font-family:"Liberation Sans", sans-serif;transform:scaleX(0.9231);'>0</span>
<span class="t" id="t123" style='left:530.12px;top:96.01px;font-size:7.9px;color:#333;font-family:"Liberation Sans", sans-serif;transform:scaleX(0.9243);'>.00</span>
<span class="t" id="t124" style='left:534.32px;top:102.00px;font-size:7.9px;color:#333;font-family:"Liberation Sans", sans-serif;transform:scaleX(0.9028);'>.0</span>
<span class="t" id="t125" style='left:388.73px;top:72.01px;font-size:7.8px;color:#4a4a4a;font-family:"Liberation Sans", sans-serif;transform:scaleX(1.0528);'>ab</span>
<span class="t" id="t126" style='left:388.73px;top:77.00px;font-size:7.8px;color:#4a4a4a;font-family:"Liberation Sans", sans-serif;transform:scaleX(1.0358);'>c</span>
<span class="t" style="left:338.7px;top:70.6px;font-size:8.6px;color:#4a4a4a;line-height:1;transform:rotate(-45deg);transform-origin:50% 50%;">ab</span>
<span class="t" style="left:490.8px;top:78.6px;font-size:29px;font-weight:bold;color:#222;line-height:1;font-family:&quot;Liberation Serif&quot;,serif;">,</span>
</div>
</div>
</body>
</html>
